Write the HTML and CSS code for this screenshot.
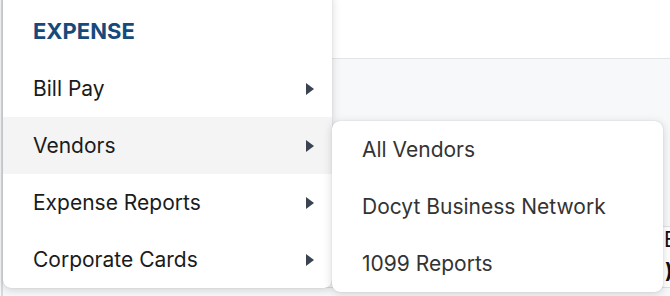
FILE: index.html
```html
<!DOCTYPE html>
<html lang="en">
<head>
    <meta charset="UTF-8">
    <meta name="viewport" content="width=device-width, initial-scale=1.0">
    <title>Docyt - Expense menu</title>
    <link rel="stylesheet" href="styles.css">
</head>
<body>
    <div class="page">
        <div class="topbar"></div>
        <div class="content">
            <div class="panel">
                <span class="peek peek-b">B</span>
                <span class="peek peek-paren">)</span>
            </div>
        </div>
    </div>

    <!-- main dropdown -->
    <nav class="menu main-menu">
        <div class="menu-title">EXPENSE</div>
        <div class="menu-item">Bill Pay <span class="arrow"></span></div>
        <div class="menu-item active">Vendors <span class="arrow"></span></div>
        <div class="menu-item">Expense Reports <span class="arrow"></span></div>
        <div class="menu-item">Corporate Cards <span class="arrow"></span></div>
    </nav>

    <!-- submenu for Vendors -->
    <nav class="menu sub-menu">
        <div class="menu-item">All Vendors</div>
        <div class="menu-item">Docyt Business Network</div>
        <div class="menu-item">1099 Reports</div>
    </nav>
</body>
</html>
```

FILE: styles.css
```css
* {
    box-sizing: border-box;
}

body {
    margin: 0;
    width: 670px;
    height: 296px;
    overflow: hidden;
    position: relative;
    font-family: Inter, "Liberation Sans", Arial, sans-serif;
    background-color: #f7f8fa;
}

.page {
    display: flex;
    flex-direction: column;
    height: 100%;
    border-left: 2px solid #d9dadd;
    margin-left: 1px;
}

.topbar {
    flex-shrink: 0;
    height: 59px;
    background: #fff;
    border-bottom: 1px solid #e3e4e6;
}

.content {
    flex: 1;
    padding: 167px 0 0 148px;
}

.panel {
    position: relative;
    height: 62px;
    border: 1px solid #e0e1e4;
    border-right: none;
    border-radius: 8px 0 0 8px;
    background: #fff;
}

.peek {
    position: absolute;
    font-size: 21px;
    color: #111;
}

.peek-b {
    left: 512px;
    top: 0;
}

.peek-paren {
    left: 513px;
    top: 31px;
    font-weight: bold;
}

.menu {
    position: absolute;
    background: #fff;
    border-radius: 8px;
    box-shadow: 0 2px 10px rgba(0, 0, 0, 0.16), 0 0 1px rgba(0, 0, 0, 0.25);
}

.main-menu {
    left: 3px;
    top: -8px;
    width: 329px;
    padding-top: 11px;
    z-index: 1;
}

.sub-menu {
    left: 332px;
    top: 121px;
    width: 331px;
    z-index: 2;
}

.menu-title {
    height: 57px;
    padding-left: 30px;
    padding-top: 15px;
    font-size: 22px;
    font-weight: 700;
    color: #174a7c;
}

.menu-item {
    height: 57px;
    display: flex;
    align-items: center;
    justify-content: space-between;
    padding: 0 16px 0 30px;
    font-size: 21px;
    color: #1b1b1b;
}

.main-menu .menu-item:last-child {
    border-radius: 0 0 8px 8px;
}

.sub-menu .menu-item {
    color: #333;
}

.menu-item.active {
    background-color: #f4f4f4;
}

.arrow {
    width: 0;
    height: 0;
    border-top: 6px solid transparent;
    border-bottom: 6px solid transparent;
    border-left: 8px solid #3a4350;
    margin-right: 2px;
}
```
